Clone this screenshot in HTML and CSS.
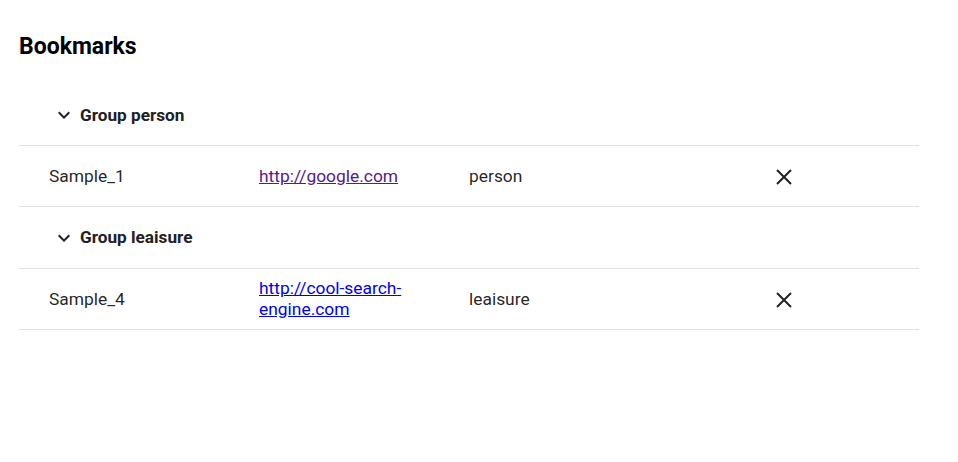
FILE: index.html
```html
<!DOCTYPE html>
<html>
<head>
<meta charset="utf-8">
<link rel="stylesheet" href="styles.css">
</head>
<body>
<div class="page">
  <h1 class="title">Bookmarks</h1>
  <table class="bm-table">
    <colgroup>
      <col class="col-name">
      <col class="col-url">
      <col class="col-group">
      <col class="col-action">
    </colgroup>
    <tbody>
      <tr class="group-row">
        <td colspan="4" class="group-cell">
          <span class="group-label">
            <svg class="chev" viewBox="0 0 24 24" width="24" height="24"><path d="M16.59 8.59L12 13.17 7.41 8.59 6 10l6 6 6-6z"/></svg>
            Group person
          </span>
        </td>
      </tr>
      <tr class="data-row">
        <td class="cell">Sample_1</td>
        <td class="cell"><a class="link visited" href="#">http://google.com</a></td>
        <td class="cell">person</td>
        <td class="cell action">
          <svg class="close" viewBox="0 0 16 16" width="16" height="16"><path d="M1 1L15 15M15 1L1 15"/></svg>
        </td>
      </tr>
      <tr class="group-row">
        <td colspan="4" class="group-cell group-cell-tall">
          <span class="group-label">
            <svg class="chev" viewBox="0 0 24 24" width="24" height="24"><path d="M16.59 8.59L12 13.17 7.41 8.59 6 10l6 6 6-6z"/></svg>
            Group leaisure
          </span>
        </td>
      </tr>
      <tr class="data-row">
        <td class="cell">Sample_4</td>
        <td class="cell"><a class="link" href="#">http://cool-search-engine.com</a></td>
        <td class="cell">leaisure</td>
        <td class="cell action">
          <svg class="close" viewBox="0 0 16 16" width="16" height="16"><path d="M1 1L15 15M15 1L1 15"/></svg>
        </td>
      </tr>
    </tbody>
  </table>
</div>
</body>
</html>
```

FILE: styles.css
```css
html, body {
  margin: 0;
  padding: 0;
  background: #ffffff;
  font-family: Roboto, "Liberation Sans", Arial, sans-serif;
}

.page {
  padding: 0 40px 0 19px;
}

.title {
  margin: 33px 0 24px;
  font-size: 23px;
  line-height: 28px;
  font-weight: 700;
  color: #000000;
}

.bm-table {
  width: 900px;
  border-collapse: collapse;
  table-layout: fixed;
}

.col-name,
.col-url,
.col-group {
  width: 210px;
}

.col-action {
  width: 270px;
}

.bm-table td {
  height: 60px;
  border-bottom: 1px solid #e0e0e0;
  padding: 0 30px;
  font-size: 17.4px;
  line-height: 21px;
  color: rgba(0, 0, 0, 0.87);
  vertical-align: middle;
}

.bm-table td.action {
  text-align: center;
  padding: 0;
}

.bm-table .group-cell {
  padding: 0 30px 0 33px;
  font-size: 17.2px;
  font-weight: 700;
  color: #212121;
}

.bm-table .group-cell-tall {
  height: 61px;
}

.group-label {
  display: flex;
  align-items: center;
  gap: 4px;
}

.chev {
  width: 24px;
  height: 24px;
  fill: #212121;
}

.close {
  display: inline-block;
  vertical-align: middle;
  width: 16px;
  height: 16px;
  fill: none;
  stroke: #212121;
  stroke-width: 2;
}

.link {
  color: #0000ee;
  text-decoration: underline;
}

.link.visited {
  color: #551a8b;
}
```
